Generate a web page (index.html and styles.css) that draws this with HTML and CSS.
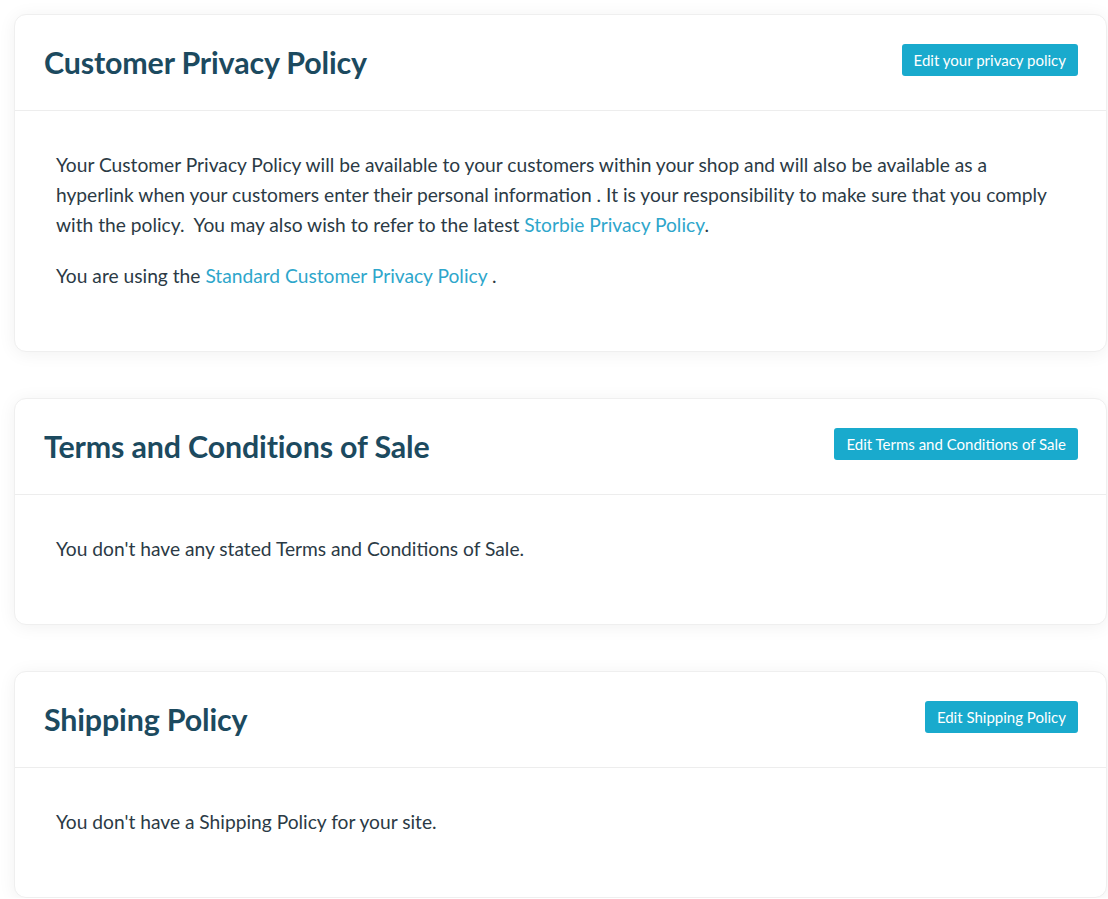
FILE: index.html
```html
<!DOCTYPE html>
<html lang="en">
<head>
<meta charset="utf-8">
<title>Policies</title>
<link rel="stylesheet" href="styles.css">
</head>
<body>
<main class="page">
  <section class="card">
    <header class="card-header">
      <h2 class="card-title">Customer Privacy Policy</h2>
      <a class="btn" href="#">Edit your privacy policy</a>
    </header>
    <div class="card-body">
      <p>Your Customer Privacy Policy will be available to your customers within your shop and will also be available as a hyperlink when your customers enter their personal information . It is your responsibility to make sure that you comply with the policy.&nbsp; You may also wish to refer to the latest <a class="link" href="#">Storbie Privacy Policy</a>.</p>
      <p>You are using the <a class="link" href="#">Standard Customer Privacy Policy </a>.</p>
    </div>
  </section>
  <section class="card">
    <header class="card-header">
      <h2 class="card-title">Terms and Conditions of Sale</h2>
      <a class="btn" href="#">Edit Terms and Conditions of Sale</a>
    </header>
    <div class="card-body">
      <p>You don't have any stated Terms and Conditions of Sale.</p>
    </div>
  </section>
  <section class="card">
    <header class="card-header">
      <h2 class="card-title">Shipping Policy</h2>
      <a class="btn" href="#">Edit Shipping Policy</a>
    </header>
    <div class="card-body">
      <p>You don't have a Shipping Policy for your site.</p>
    </div>
  </section>
</main>
</body>
</html>
```
FILE: styles.css
```css
* { box-sizing: border-box; }
html, body { margin: 0; padding: 0; background: #ffffff; }
body {
  font-family: Lato, "Liberation Sans", sans-serif;
  color: #2b3a45;
}
.page {
  display: flex;
  flex-direction: column;
  gap: 46px;
  padding: 14px 1px 0 14px;
}
.card {
  background: #fff;
  border: 1px solid #efefef;
  border-radius: 12px;
  box-shadow: 0 2px 18px rgba(0, 0, 0, 0.06);
}
.card-header {
  height: 96px;
  display: flex;
  align-items: center;
  justify-content: space-between;
  padding: 0 28px 0 29px;
  border-bottom: 1px solid #ededed;
}
.card-title {
  margin: 0 0 2px 0;
  font-size: 30.4px;
  font-weight: 700;
  color: #1c4a5f;
  letter-spacing: -0.15px;
}
.btn {
  display: inline-flex;
  align-items: center;
  height: 32px;
  margin-bottom: 6px;
  padding: 0 12px;
  background: #19aacd;
  color: #fff;
  font-size: 15px;
  text-decoration: none;
  border-radius: 3px;
}
.card-body {
  padding: 39px 42px 40px 41px;
  font-size: 19.2px;
  line-height: 30px;
}
.card-body p { margin: 0 0 21px 0; }
.card-body p:last-child { margin-bottom: 20px; }
.link { color: #2ea6cb; text-decoration: none; }
```
